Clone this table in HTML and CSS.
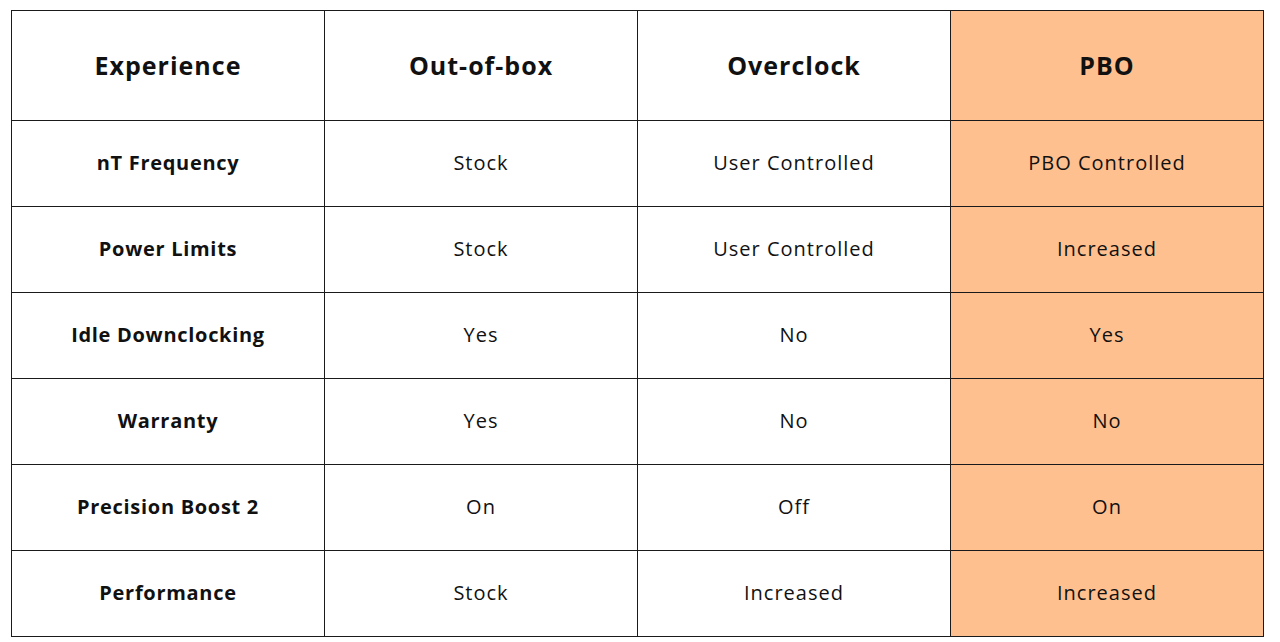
FILE: index.html
```html
<!DOCTYPE html>
<html>
<head>
<meta charset="utf-8">
<link rel="stylesheet" href="styles.css">
</head>
<body>
<table class="cmp">
  <colgroup>
    <col class="c"><col class="c"><col class="c"><col class="c">
  </colgroup>
  <thead>
    <tr class="head">
      <th>Experience</th>
      <th>Out-of-box</th>
      <th>Overclock</th>
      <th class="pbo">PBO</th>
    </tr>
  </thead>
  <tbody>
    <tr><th>nT Frequency</th><td>Stock</td><td>User Controlled</td><td class="pbo">PBO Controlled</td></tr>
    <tr><th>Power Limits</th><td>Stock</td><td>User Controlled</td><td class="pbo">Increased</td></tr>
    <tr><th>Idle Downclocking</th><td>Yes</td><td>No</td><td class="pbo">Yes</td></tr>
    <tr><th>Warranty</th><td>Yes</td><td>No</td><td class="pbo">No</td></tr>
    <tr><th>Precision Boost 2</th><td>On</td><td>Off</td><td class="pbo">On</td></tr>
    <tr><th>Performance</th><td>Stock</td><td>Increased</td><td class="pbo">Increased</td></tr>
  </tbody>
</table>
</body>
</html>
```
FILE: styles.css
```css
html, body {
  margin: 0;
  padding: 0;
  background: #ffffff;
}
body {
  padding: 10px 0 0 11px;
  font-family: "Open Sans", "Noto Sans", sans-serif;
  color: #111111;
}
.cmp {
  border-collapse: collapse;
  table-layout: fixed;
  width: 1253px;
}
.cmp .c {
  width: 313px;
}
.cmp th, .cmp td {
  border: 1px solid #1a1a1a;
  text-align: center;
  vertical-align: middle;
  padding: 0 0 2px 0;
  height: 83px;
}
.cmp tbody th {
  font-weight: 700;
  font-size: 20px;
  letter-spacing: 0.7px;
}
.cmp td {
  font-weight: 400;
  font-size: 20px;
  letter-spacing: 1px;
}
.cmp .head th {
  height: 107px;
  font-size: 25px;
  font-weight: 700;
  letter-spacing: 1px;
}
.cmp .pbo {
  background: #ffc08f;
}
```
